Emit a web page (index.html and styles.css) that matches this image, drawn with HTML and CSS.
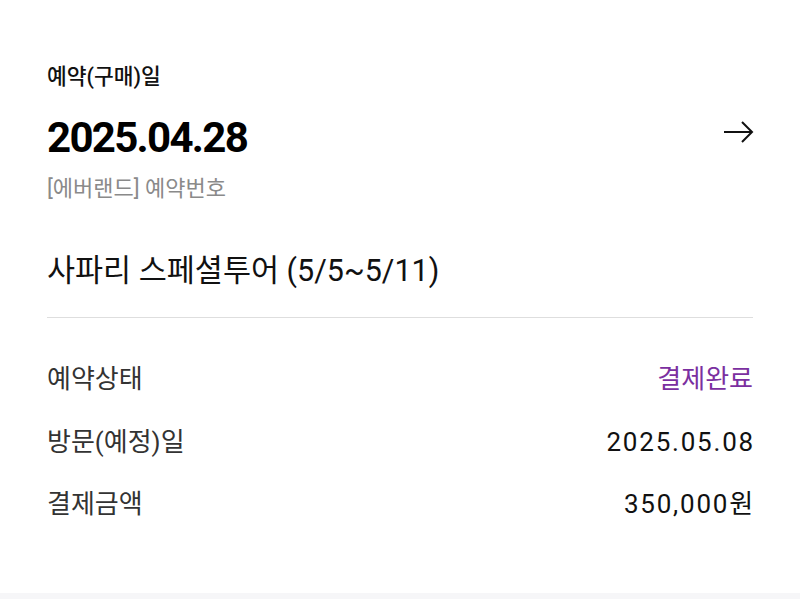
FILE: index.html
```html
<!DOCTYPE html>
<html lang="ko">
<head>
    <meta charset="UTF-8">
    <meta name="viewport" content="width=device-width, initial-scale=1.0">
    <title>예약 상세</title>
    <link rel="stylesheet" href="styles.css">
</head>
<body>
    <main class="sheet">
        <section class="summary">
            <p class="label">예약(구매)일</p>
            <div class="date-row">
                <h1 class="date">2025.04.28</h1>
                <a class="go" href="#" aria-label="상세보기">
                    <svg width="30" height="24" viewBox="0 0 30 24" fill="none" stroke="#111" stroke-width="2">
                        <path d="M0 11H28"/>
                        <path d="M18 1L28 11L18 21"/>
                    </svg>
                </a>
            </div>
            <p class="ref">[에버랜드] 예약번호</p>
        </section>

        <h2 class="product">사파리 스페셜투어 (5/5~5/11)</h2>
        <div class="divider"></div>

        <dl class="details">
            <div class="row">
                <dt>예약상태</dt>
                <dd class="status">결제완료</dd>
            </div>
            <div class="row">
                <dt>방문(예정)일</dt>
                <dd class="num">2025.05.08</dd>
            </div>
            <div class="row">
                <dt>결제금액</dt>
                <dd class="num">350,000원</dd>
            </div>
        </dl>
    </main>
    <div class="strip"></div>
</body>
</html>
```

FILE: styles.css
```css
body {
    margin: 0;
    font-family: Roboto, "Noto Sans CJK KR", sans-serif;
    color: #111;
    background: #fff;
}
.sheet {
    box-sizing: border-box;
    height: 593px;
    padding: 61px 47px 0;
}
p, h1, h2, dl, dd {
    margin: 0;
}
.label {
    font-size: 21.5px;
    line-height: 32px;
    font-weight: 500;
}
.date-row {
    display: flex;
    justify-content: space-between;
    align-items: center;
    margin-top: 21px;
}
.date {
    font-size: 42px;
    line-height: 48px;
    font-weight: 700;
    color: #000;
    letter-spacing: -1.7px;
}
.go {
    display: flex;
    margin-right: -1px;
    margin-top: -10px;
}
.ref {
    margin-top: 13px;
    font-size: 22px;
    line-height: 28px;
    color: #8a8a8a;
}
.product {
    margin-top: 48px;
    font-size: 30.5px;
    line-height: 40px;
    font-weight: 400;
    color: #111;
}
.divider {
    margin-top: 26px;
    height: 1px;
    background: #dedede;
}
.details {
    margin-top: 43px;
    display: flex;
    flex-direction: column;
    gap: 26.5px;
}
.row {
    display: flex;
    justify-content: space-between;
    align-items: center;
    font-size: 26px;
    line-height: 36px;
}
.row dt {
    color: #333;
}
.status {
    color: #7b2fa0;
}
.num {
    font-size: 26px;
    letter-spacing: 1.8px;
    margin-right: -2px;
}
.strip {
    height: 20px;
    background: #f6f6f8;
}
```
